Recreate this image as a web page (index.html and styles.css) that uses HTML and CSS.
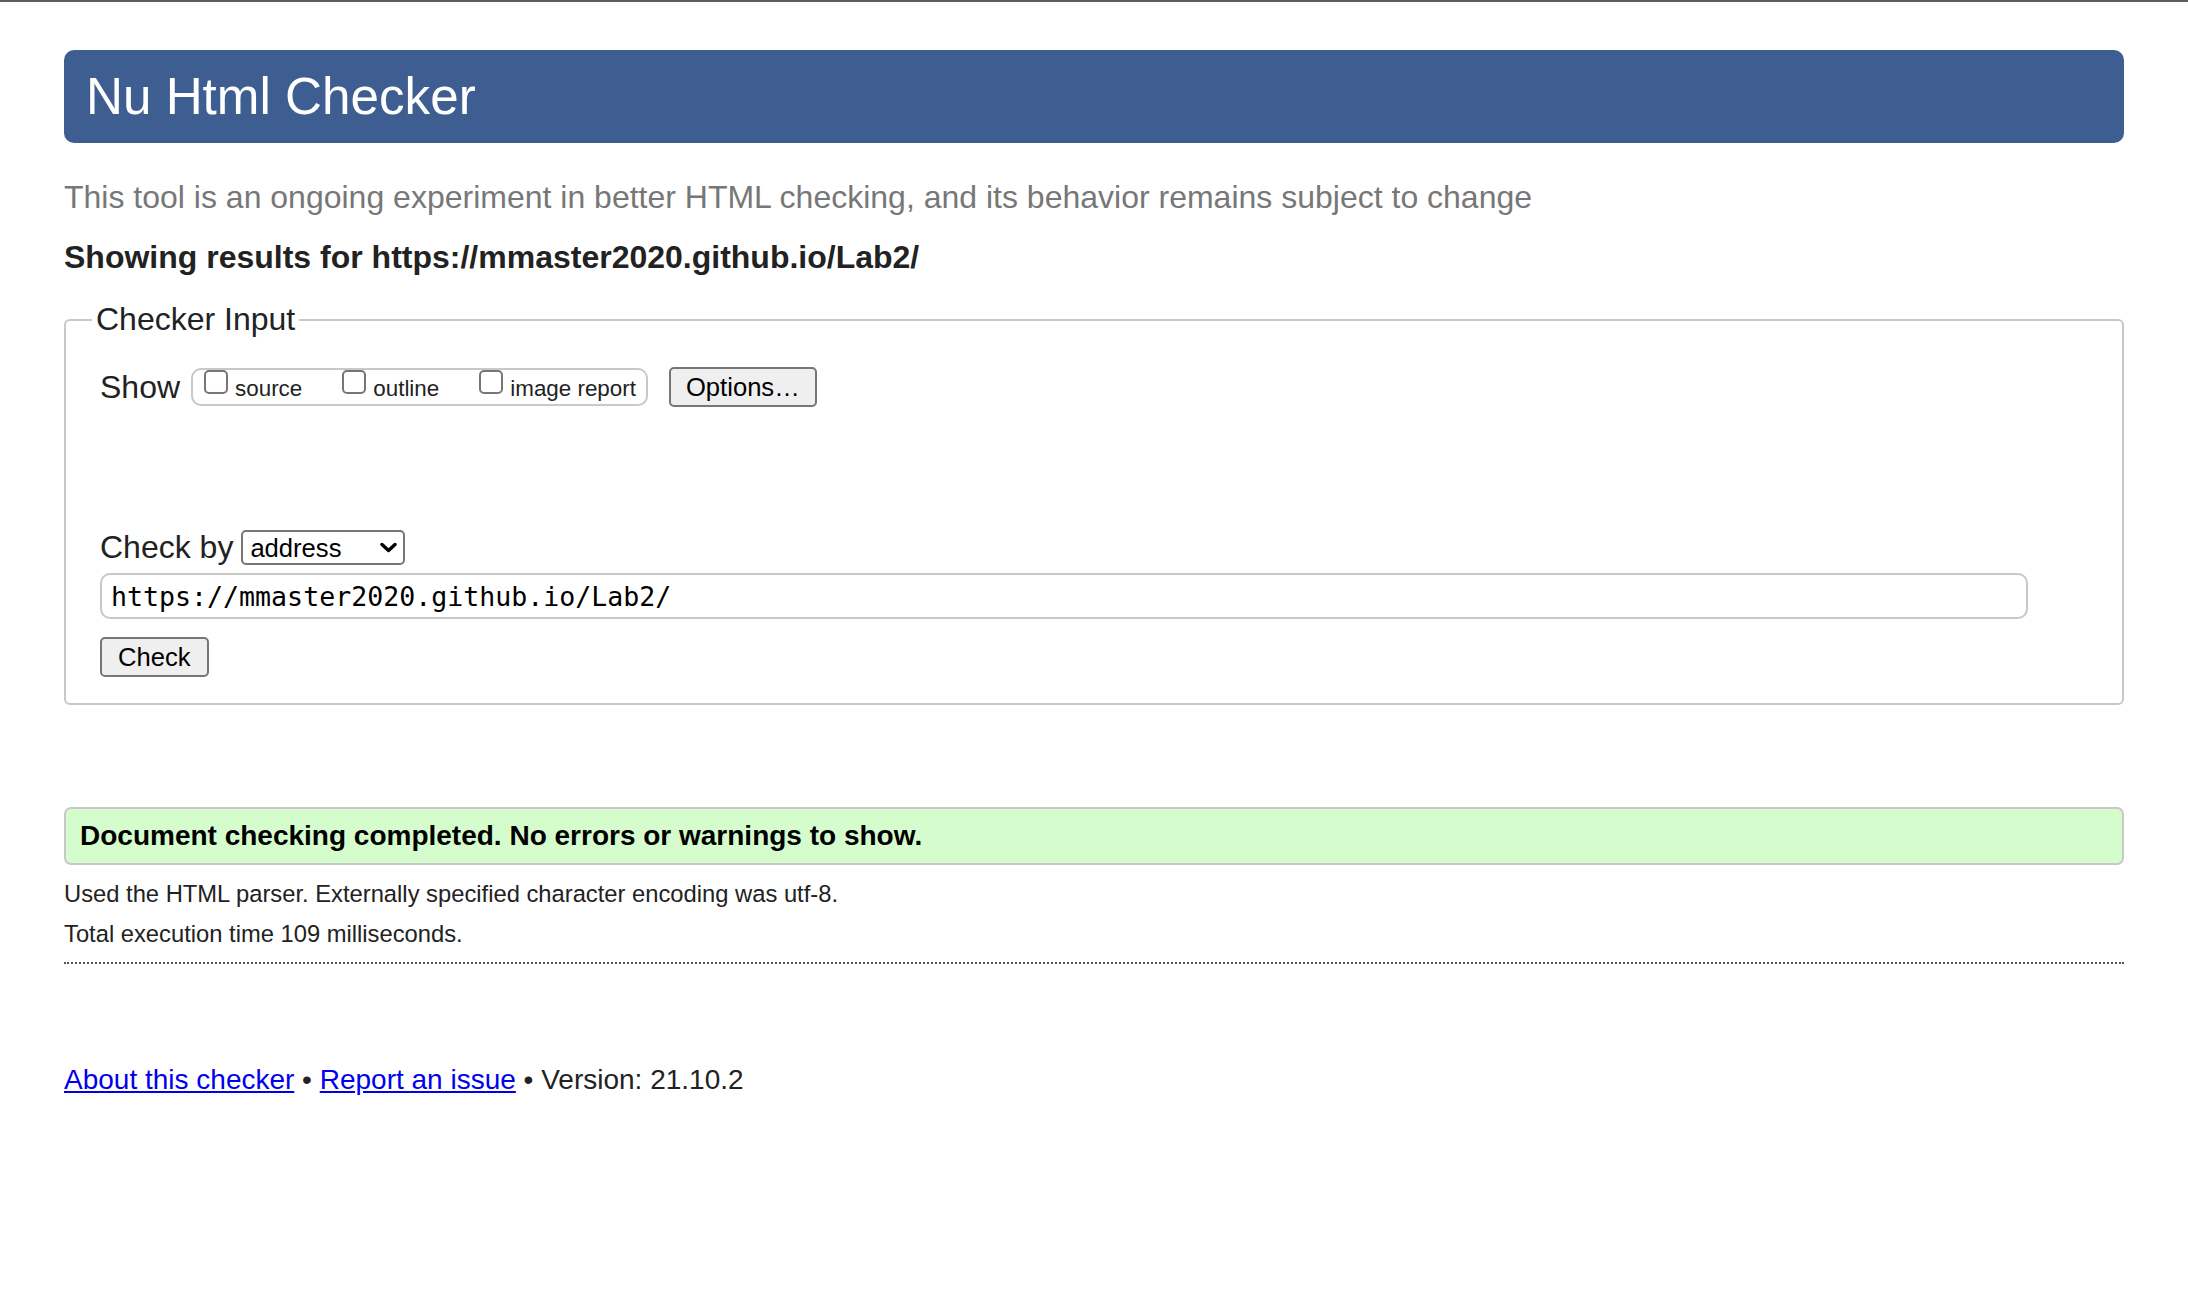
FILE: index.html
```html
<!DOCTYPE html>
<html lang="en">
<head>
<meta charset="utf-8">
<title>Showing results for https://mmaster2020.github.io/Lab2/ - Nu Html Checker</title>
<link rel="stylesheet" href="styles.css">
</head>
<body>
<div class="chrome-line"></div>
<main class="page">
  <h1 class="title">Nu Html Checker</h1>
  <p class="intro">This tool is an ongoing experiment in better HTML checking, and its behavior remains subject to change</p>
  <p class="results-for">Showing results for https://mmaster2020.github.io/Lab2/</p>
  <form class="checker">
    <fieldset class="input-set">
      <legend class="input-legend">Checker Input</legend>
      <div class="show-row">
        <span class="row-label show-label">Show</span>
        <div class="show-group">
          <label class="opt"><input type="checkbox" class="cb"><span class="opt-text">source</span></label>
          <label class="opt"><input type="checkbox" class="cb"><span class="opt-text">outline</span></label>
          <label class="opt"><input type="checkbox" class="cb"><span class="opt-text last">image report</span></label>
        </div>
        <button type="button" class="btn options-btn">Options…</button>
      </div>
      <div class="checkby-row">
        <span class="row-label checkby-label">Check by</span>
        <span class="select">
          <select class="select-native"><option>address</option></select>
          <svg class="chevron" width="17" height="11" viewBox="0 0 17 11"><path d="M2 2.5 L8.5 8.5 L15 2.5" fill="none" stroke="#000" stroke-width="3.4" stroke-linecap="round" stroke-linejoin="round"/></svg>
        </span>
      </div>
      <input class="url" type="url" value="https://mmaster2020.github.io/Lab2/">
      <button type="button" class="btn check-btn">Check</button>
    </fieldset>
  </form>
  <p class="success">Document checking completed. No errors or warnings to show.</p>
  <p class="detail first">Used the HTML parser. Externally specified character encoding was utf-8.</p>
  <p class="detail">Total execution time 109 milliseconds.</p>
  <hr class="sep">
  <p class="footer"><a href="#">About this checker</a> • <a href="#">Report an issue</a> • Version: 21.10.2</p>
</main>
</body>
</html>
```
FILE: styles.css
```css
html, body {
  background: #fff;
}
body {
  margin: 0;
  font-family: "Liberation Sans", Arial, sans-serif;
  color: #222;
}
.chrome-line {
  height: 2px;
  background: #5c5c60;
}
.page {
  padding: 0 64px 120px;
}
.title {
  margin: 48px 0 0;
  height: 93px;
  box-sizing: border-box;
  padding: 0 22px;
  background: #3e5e91;
  color: #fff;
  font-size: 51.2px;
  font-weight: normal;
  line-height: 93px;
  border-radius: 10px;
}
.intro {
  margin: 36px 0 0;
  font-size: 32px;
  line-height: 37px;
  color: #777;
}
.results-for {
  margin: 23px 0 0;
  font-size: 32px;
  line-height: 37px;
  font-weight: bold;
  color: #222;
}
.checker {
  margin: 25px 0 0;
}
.input-set {
  margin: 0;
  min-width: 0;
  padding: 29px 34px 26px 34px;
  border: 2px solid #c8c8c8;
  border-radius: 6px;
}
.input-legend {
  font-size: 32px;
  line-height: 37px;
  padding: 0 4px;
  margin-left: -8px;
}
.show-row {
  display: flex;
  align-items: center;
  height: 40px;
}
.row-label {
  font-size: 32px;
  line-height: 37px;
}
.show-label {
  margin-right: 11px;
}
.show-group {
  display: flex;
  align-items: flex-start;
  border: 2px solid #c8c8c8;
  border-radius: 10px;
  padding: 0 10px 2px 3px;
  margin-right: 21px;
}
.opt {
  display: flex;
  align-items: flex-start;
}
.cb {
  appearance: none;
  -webkit-appearance: none;
  width: 24px;
  height: 24px;
  box-sizing: border-box;
  margin: 0 7px 0 8px;
  border: 2px solid #767676;
  border-radius: 5px;
  background: #fff;
}
.opt-text {
  font-size: 22.4px;
  line-height: 26px;
  margin-top: 6px;
  margin-right: 32px;
  color: #222;
}
.opt-text.last {
  margin-right: 0;
}
.btn {
  font-family: "Liberation Sans", Arial, sans-serif;
  font-size: 25.6px;
  height: 40px;
  box-sizing: border-box;
  padding: 0 14px;
  border: 2px solid #767676;
  border-radius: 5px;
  background: #efefef;
  color: #000;
}
.options-btn {
  padding: 0 15px;
}
.checkby-row {
  margin-top: 122px;
  display: flex;
  align-items: center;
  height: 37px;
}
.checkby-label {
  margin-right: 8px;
}
.select {
  display: inline-flex;
  align-items: center;
  justify-content: space-between;
  width: 164px;
  height: 35px;
  box-sizing: border-box;
  border: 2px solid #767676;
  border-radius: 5px;
  padding: 0 6px 0 7px;
  background: #fff;
}
.select-native {
  appearance: none;
  -webkit-appearance: none;
  border: none;
  background: transparent;
  padding: 0;
  margin: 0;
  font-family: "Liberation Sans", Arial, sans-serif;
  font-size: 25.6px;
  color: #000;
  flex: 1;
  outline: none;
}
.chevron {
  flex: none;
}
.url {
  display: block;
  margin: 7px 0 0;
  width: 97%;
  height: 46px;
  box-sizing: border-box;
  border: 2px solid #c8c8c8;
  border-radius: 10px;
  padding: 0 9px;
  font-family: "DejaVu Sans Mono", "Liberation Mono", monospace;
  font-size: 26.6px;
  color: #000;
  background: #fff;
}
.check-btn {
  display: block;
  margin-top: 18px;
  padding: 0 16px;
}
.success {
  margin: 102px 0 0;
  border: 2px solid #c8c8c8;
  border-radius: 7px;
  background: #d5fccd;
  padding: 11px 14px;
  font-size: 28px;
  line-height: 32px;
  font-weight: bold;
  color: #000;
}
.detail {
  margin: 12px 0 0;
  font-size: 23.75px;
  line-height: 28px;
  color: #222;
}
.detail.first {
  margin-top: 15px;
}
.sep {
  margin: 14px 0 0;
  height: 0;
  border: 0;
  border-top: 2px dotted #555;
}
.footer {
  margin: 100px 0 0;
  font-size: 28px;
  line-height: 32px;
  color: #222;
}
.footer a {
  color: #0000ee;
}
```
